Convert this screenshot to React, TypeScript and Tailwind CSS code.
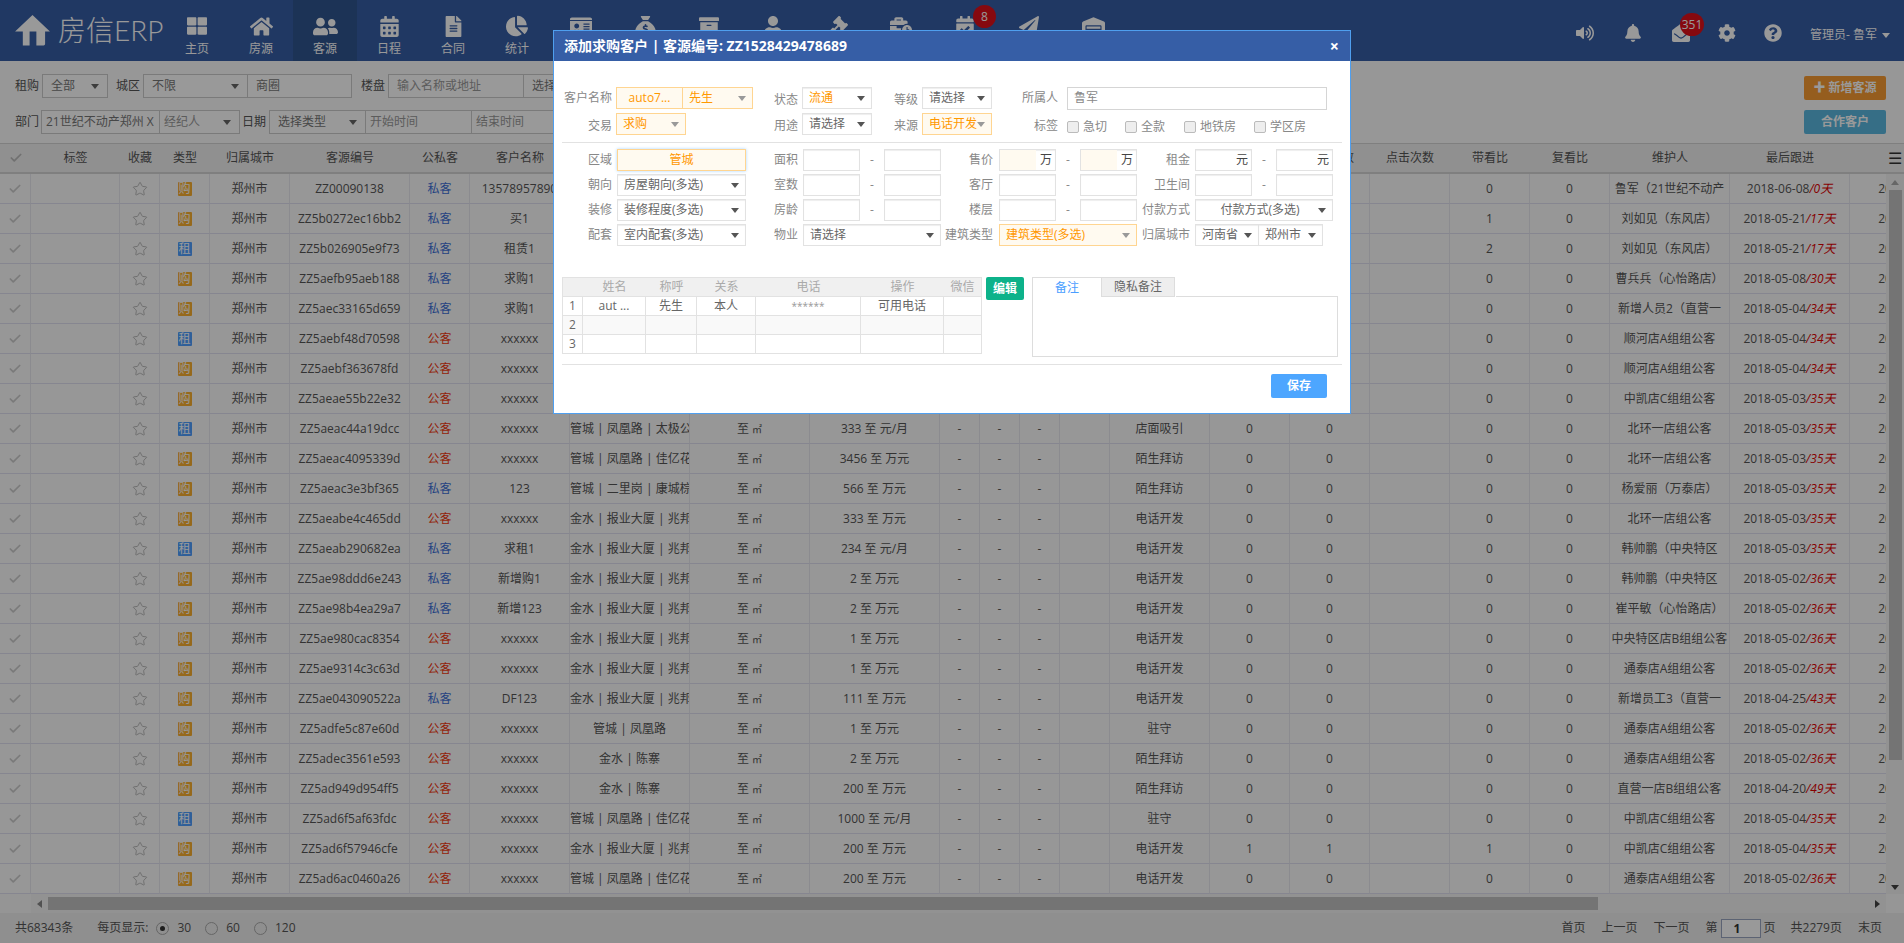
import { Check, Star } from "lucide-react";
import {
  FaArchive,
  FaBell,
  FaBusinessTime,
  FaCalendarAlt,
  FaCalendarCheck,
  FaChartPie,
  FaCog,
  FaEnvelopeOpen,
  FaFileAlt,
  FaGavel,
  FaHome,
  FaIdCard,
  FaPaperPlane,
  FaQuestionCircle,
  FaThLarge,
  FaUser,
  FaUserFriends,
  FaVolumeUp,
  FaWarehouse,
} from "react-icons/fa";
import { FaSackDollar } from "react-icons/fa6";

// 统计之后的菜单文字被弹窗挡住，只留图标
const navItems = [
  { label: "主页", Icon: FaThLarge, size: 20 },
  { label: "房源", Icon: FaHome, size: 23 },
  { label: "客源", Icon: FaUserFriends, size: 25, active: true },
  { label: "日程", Icon: FaCalendarAlt, size: 21 },
  { label: "合同", Icon: FaFileAlt, size: 21 },
  { label: "统计", Icon: FaChartPie, size: 22 },
  { label: "", Icon: FaIdCard, size: 22 },
  { label: "", Icon: FaSackDollar, size: 21 },
  { label: "", Icon: FaArchive, size: 20 },
  { label: "", Icon: FaUser, size: 20 },
  { label: "", Icon: FaGavel, size: 21 },
  { label: "", Icon: FaBusinessTime, size: 22 },
  { label: "", Icon: FaCalendarCheck, size: 20, badge: "8" },
  { label: "", Icon: FaPaperPlane, size: 20 },
  { label: "", Icon: FaWarehouse, size: 23 },
];

const colWidths = [31, 89, 40, 50, 80, 120, 60, 100, 120, 120, 130, 40, 40, 40, 50, 100, 80, 80, 80, 80, 80, 120, 120, 120];
const headers = ["", "标签", "收藏", "类型", "归属城市", "客源编号", "公私客", "客户名称", "", "", "", "", "", "", "", "", "", "带看次数", "点击次数", "带看比", "复看比", "维护人", "最后跟进", ""];

const FX = "管城 | 凤凰路 | 佳亿花";
const JS = "金水 | 报业大厦 | 兆邦";

type Row = [string, string, string, string, string, string, string, string, string, string, string, string, string];

// 编号, 类型, 公私, 名称, 区域, 价格, 来源, 次数1, 次数2, 带看, 维护人, 日期, 天数
const rows: Row[] = [
  ["ZZ00090138", "购", "私客", "13578957890", "", "", "", "", "", "0", "鲁军（21世纪不动产", "2018-06-08", "0天"],
  ["ZZ5b0272ec16bb2", "购", "私客", "买1", "", "", "", "", "", "1", "刘如见（东风店）", "2018-05-21", "17天"],
  ["ZZ5b026905e9f73", "租", "私客", "租赁1", "", "", "", "", "", "2", "刘如见（东风店）", "2018-05-21", "17天"],
  ["ZZ5aefb95aeb188", "购", "私客", "求购1", "", "", "", "", "", "0", "曹兵兵（心怡路店）", "2018-05-08", "30天"],
  ["ZZ5aec33165d659", "购", "私客", "求购1", "", "", "", "", "", "0", "新增人员2（直营一", "2018-05-04", "34天"],
  ["ZZ5aebf48d70598", "租", "公客", "xxxxxx", "", "", "", "", "", "0", "顺河店A组组公客", "2018-05-04", "34天"],
  ["ZZ5aebf363678fd", "购", "公客", "xxxxxx", "", "", "", "", "", "0", "顺河店A组组公客", "2018-05-04", "34天"],
  ["ZZ5aeae55b22e32", "购", "公客", "xxxxxx", "", "", "", "", "", "0", "中凯店C组组公客", "2018-05-03", "35天"],
  ["ZZ5aeac44a19dcc", "租", "公客", "xxxxxx", "管城 | 凤凰路 | 太极公", "333 至 元/月", "店面吸引", "0", "0", "0", "北环一店组公客", "2018-05-03", "35天"],
  ["ZZ5aeac4095339d", "购", "公客", "xxxxxx", FX, "3456 至 万元", "陌生拜访", "0", "0", "0", "北环一店组公客", "2018-05-03", "35天"],
  ["ZZ5aeac3e3bf365", "购", "私客", "123", "管城 | 二里岗 | 康城棕", "566 至 万元", "陌生拜访", "0", "0", "0", "杨爱丽（万泰店）", "2018-05-03", "35天"],
  ["ZZ5aeabe4c465dd", "购", "公客", "xxxxxx", JS, "333 至 万元", "电话开发", "0", "0", "0", "北环一店组公客", "2018-05-03", "35天"],
  ["ZZ5aeab290682ea", "租", "私客", "求租1", JS, "234 至 元/月", "电话开发", "0", "0", "0", "韩帅鹏（中央特区", "2018-05-03", "35天"],
  ["ZZ5ae98ddd6e243", "购", "私客", "新增购1", JS, "2 至 万元", "电话开发", "0", "0", "0", "韩帅鹏（中央特区", "2018-05-02", "36天"],
  ["ZZ5ae98b4ea29a7", "购", "私客", "新增123", JS, "2 至 万元", "电话开发", "0", "0", "0", "崔平敏（心怡路店）", "2018-05-02", "36天"],
  ["ZZ5ae980cac8354", "购", "公客", "xxxxxx", JS, "1 至 万元", "电话开发", "0", "0", "0", "中央特区店B组组公客", "2018-05-02", "36天"],
  ["ZZ5ae9314c3c63d", "购", "公客", "xxxxxx", JS, "1 至 万元", "电话开发", "0", "0", "0", "通泰店A组组公客", "2018-05-02", "36天"],
  ["ZZ5ae043090522a", "购", "私客", "DF123", JS, "111 至 万元", "电话开发", "0", "0", "0", "新增员工3（直营一", "2018-04-25", "43天"],
  ["ZZ5adfe5c87e60d", "购", "公客", "xxxxxx", "管城 | 凤凰路", "1 至 万元", "驻守", "0", "0", "0", "通泰店A组组公客", "2018-05-02", "36天"],
  ["ZZ5adec3561e593", "购", "公客", "xxxxxx", "金水 | 陈寨", "2 至 万元", "陌生拜访", "0", "0", "0", "通泰店A组组公客", "2018-05-02", "36天"],
  ["ZZ5ad949d954ff5", "购", "公客", "xxxxxx", "金水 | 陈寨", "200 至 万元", "陌生拜访", "0", "0", "0", "直营一店B组组公客", "2018-04-20", "49天"],
  ["ZZ5ad6f5af63fdc", "租", "公客", "xxxxxx", FX, "1000 至 元/月", "驻守", "0", "0", "0", "中凯店C组组公客", "2018-05-04", "35天"],
  ["ZZ5ad6f57946cfe", "购", "公客", "xxxxxx", JS, "200 至 万元", "电话开发", "1", "1", "1", "中凯店C组组公客", "2018-05-04", "35天"],
  ["ZZ5ad6ac0460a26", "购", "公客", "xxxxxx", FX, "200 至 万元", "电话开发", "0", "0", "0", "通泰店A组组公客", "2018-05-02", "36天"],
];

const Caret = ({ color = "border-t-[#666]" }: { color?: string }) => (
  <span className={`h-0 w-0 shrink-0 border-x-[4px] border-t-[5px] border-x-transparent ${color}`} />
);

const FilterBox = ({ text, w, caret, left, muted }: { text: string; w: string; caret?: boolean; left?: boolean; muted?: boolean }) => (
  <div className={`flex h-full items-center justify-between border border-[#ccc] bg-white pl-2 pr-2 ${w} ${left ? "" : "border-l-0"} ${muted ? "text-[#999]" : "text-[#777]"}`}>
    <span className="truncate">{text}</span>
    {caret && <Caret />}
  </div>
);

const Sel = ({ text, w, hot, center }: { text: string; w: string; hot?: boolean; center?: boolean }) => (
  <div
    className={`flex h-[22px] shrink-0 items-center justify-between pl-[6px] pr-[6px] ${w} ${
      hot ? "border border-[#ffd591] bg-[#fffaf0] text-[#ff9800]" : "border border-[#e2e2e2] bg-white text-[#666] shadow-[inset_0_1px_1px_#eee]"
    }`}
  >
    <span className={`truncate ${center ? "flex-1 text-center" : ""}`}>{text}</span>
    <Caret color={hot ? "border-t-[#999]" : "border-t-[#555]"} />
  </div>
);

const Lbl = ({ text, w }: { text: string; w: string }) => (
  <span className={`shrink-0 text-right text-[#888] ${w}`}>{text}</span>
);

const Inp = ({ unit, tint }: { unit?: string; tint?: boolean }) => (
  <div className="flex h-[22px] w-[57px] shrink-0 border border-[#e2e2e2] bg-white shadow-[inset_0_1px_1px_#eee]">
    <span className={`flex-1 ${tint ? "bg-[#fffaf0]" : ""}`} />
    {unit && <span className="pl-1 pr-[3px] leading-[20px] text-[#444]">{unit}</span>}
  </div>
);

const Range = ({ unit, tint }: { unit?: string; tint?: boolean }) => (
  <div className="flex shrink-0 items-center">
    <Inp unit={unit} tint={tint} />
    <span className="w-[24px] text-center text-[#888]">-</span>
    <Inp unit={unit} tint={tint} />
  </div>
);

const Tick = ({ text, ml }: { text: string; ml: string }) => (
  <label className={`flex items-center pt-[5px] ${ml}`}>
    <span className="h-[12px] w-[12px] rounded-[2px] border border-[#bbb] bg-[#eee]" />
    <span className="ml-[4px] text-[#888]">{text}</span>
  </label>
);

const Radio = ({ on, ml }: { on?: boolean; ml: string }) => (
  <span className={`flex h-[13px] w-[13px] items-center justify-center rounded-full border border-[#aaa] bg-[#eee] ${ml}`}>
    {on && <span className="h-[5px] w-[5px] rounded-full bg-[#333]" />}
  </span>
);

const contactWidths = [20, 63, 51, 59, 105, 83, 38];

const Modal = () => (
  <div className="absolute left-[553px] top-[30px] flex h-[384px] w-[798px] flex-col border border-[#4f9fef] bg-white text-xs">
    <div className="flex h-[30px] shrink-0 items-center justify-between bg-[#365ea6] pl-[10px] pr-[11px] text-white">
      <span className="text-sm font-bold">添加求购客户 | 客源编号: ZZ1528429478689</span>
      <span className="text-base font-bold leading-none">×</span>
    </div>

    <div className="mt-[26px] flex h-[22px] items-center">
      <Lbl text="客户名称" w="w-[58px]" />
      <div className="ml-1 flex h-[22px] w-[137px] shrink-0 border border-[#ffd591] bg-[#fffaf0] text-[#ff9800]">
        <span className="w-[66px] border-r border-[#ffd591] text-center leading-[20px]">auto7...</span>
        <span className="flex flex-1 items-center justify-between pl-[6px] pr-[6px]">
          先生
          <Caret color="border-t-[#999]" />
        </span>
      </div>
      <Lbl text="状态" w="w-[45px] pt-1" />
      <div className="ml-1"><Sel text="流通" w="w-[70px] text-[#ff9800]!" /></div>
      <Lbl text="等级" w="w-[46px] pt-1" />
      <div className="ml-1"><Sel text="请选择" w="w-[70px]" /></div>
      <Lbl text="所属人" w="w-[66px]" />
      <div className="ml-[9px] flex h-[23px] w-[260px] items-center border border-[#d5d5d5] pl-[6px] text-[#888]">鲁军</div>
    </div>

    <div className="mt-1 flex h-[22px] items-center">
      <Lbl text="交易" w="w-[58px] pt-1" />
      <div className="ml-1"><Sel text="求购" w="w-[70px]" hot /></div>
      <span className="w-[67px] shrink-0" />
      <Lbl text="用途" w="w-[45px] pt-1" />
      <div className="ml-1"><Sel text="请选择" w="w-[70px]" /></div>
      <Lbl text="来源" w="w-[46px] pt-1" />
      <div className="ml-1"><Sel text="电话开发" w="w-[70px]" hot /></div>
      <Lbl text="标签" w="w-[66px] pt-1" />
      <Tick text="急切" ml="ml-[9px]" />
      <Tick text="全款" ml="ml-[18px]" />
      <Tick text="地铁房" ml="ml-[19px]" />
      <Tick text="学区房" ml="ml-[18px]" />
    </div>

    <div className="mx-2 mt-[7px] border-t border-[#e2e2e2]" />

    <div className="mt-[6px] flex flex-col gap-[3px]">
      <div className="flex h-[22px] items-center">
        <Lbl text="区域" w="w-[58px]" />
        <div className="ml-[5px] h-[22px] w-[129px] shrink-0 border border-[#ffd591] bg-[#fffaf0] text-center leading-[20px] text-[#ff9800] shadow-[0_0_3px_#a8d4ff]">管城</div>
        <Lbl text="面积" w="w-[52px]" />
        <div className="ml-[5px]"><Range /></div>
        <Lbl text="售价" w="w-[52px]" />
        <div className="ml-[6px]"><Range unit="万" tint /></div>
        <Lbl text="租金" w="w-[53px]" />
        <div className="ml-[5px]"><Range unit="元" /></div>
      </div>
      <div className="flex h-[22px] items-center">
        <Lbl text="朝向" w="w-[58px]" />
        <div className="ml-[5px]"><Sel text="房屋朝向(多选)" w="w-[129px]" /></div>
        <Lbl text="室数" w="w-[52px]" />
        <div className="ml-[5px]"><Range /></div>
        <Lbl text="客厅" w="w-[52px]" />
        <div className="ml-[6px]"><Range /></div>
        <Lbl text="卫生间" w="w-[53px]" />
        <div className="ml-[5px]"><Range /></div>
      </div>
      <div className="flex h-[22px] items-center">
        <Lbl text="装修" w="w-[58px]" />
        <div className="ml-[5px]"><Sel text="装修程度(多选)" w="w-[129px]" /></div>
        <Lbl text="房龄" w="w-[52px]" />
        <div className="ml-[5px]"><Range /></div>
        <Lbl text="楼层" w="w-[52px]" />
        <div className="ml-[6px]"><Range /></div>
        <Lbl text="付款方式" w="w-[53px]" />
        <div className="ml-[5px]"><Sel text="付款方式(多选)" w="w-[138px]" center /></div>
      </div>
      <div className="flex h-[22px] items-center">
        <Lbl text="配套" w="w-[58px]" />
        <div className="ml-[5px]"><Sel text="室内配套(多选)" w="w-[129px]" /></div>
        <Lbl text="物业" w="w-[52px]" />
        <div className="ml-[5px]"><Sel text="请选择" w="w-[138px]" /></div>
        <Lbl text="建筑类型" w="w-[52px]" />
        <div className="ml-[6px]"><Sel text="建筑类型(多选)" w="w-[138px]" hot /></div>
        <Lbl text="归属城市" w="w-[53px]" />
        <div className="ml-[5px] flex">
          <Sel text="河南省" w="w-[64px]" />
          <Sel text="郑州市" w="w-[64px] border-l-0" />
        </div>
      </div>
    </div>

    <div className="ml-2 mt-[31px] flex h-[80px] items-start">
      <table className="w-[420px] table-fixed border-separate border-spacing-0 border-l border-t border-[#e2e2e2] text-center">
        <colgroup>
          {contactWidths.map((w, i) => (
            <col key={i} style={{ width: w }} />
          ))}
        </colgroup>
        <thead>
          <tr className="bg-[#f0f0f0] text-[#aaa]">
            {["", "姓名", "称呼", "关系", "电话", "操作", "微信"].map((h, i) => (
              <th key={i} className="h-[19px] border-b border-[#e2e2e2] font-normal last:border-r">{h}</th>
            ))}
          </tr>
        </thead>
        <tbody className="text-[#666]">
          {[
            ["1", "aut ...", "先生", "本人", "******", "可用电话", ""],
            ["2", "", "", "", "", "", ""],
            ["3", "", "", "", "", "", ""],
          ].map((r, i) => (
            <tr key={i} className={i === 1 ? "bg-[#f9f9f9]" : ""}>
              {r.map((c, j) => (
                <td key={j} className={`h-[19px] overflow-hidden whitespace-nowrap border-b border-r border-[#e2e2e2] leading-none ${c === "******" ? "text-[10px] text-[#999]" : ""}`}>{c}</td>
              ))}
            </tr>
          ))}
        </tbody>
      </table>
      <button className="ml-1 h-[23px] w-[38px] rounded-[2px] bg-[#0db28a] font-bold text-white">编辑</button>
      <div className="ml-2 w-[306px]">
        <div className="flex h-[20px]">
          <span className="w-[69px] border-l border-t border-[#ddd] text-center leading-[19px] text-[#4a9eff]">备注</span>
          <span className="w-[74px] border-x border-b border-t border-[#ddd] bg-[#eee] text-center leading-[18px] text-[#666]">隐私备注</span>
        </div>
        <div className="-mt-px h-[61px] border border-t-0 border-[#ddd]">
          <div className="ml-[143px] border-t border-[#ddd]" />
        </div>
      </div>
    </div>

    <div className="mx-2 mt-[7px] border-t border-[#e2e2e2]" />

    <div className="mt-[9px] flex justify-end pr-[23px]">
      <button className="h-[24px] w-[56px] rounded-[2px] bg-[#4da6ff] font-bold text-white">保存</button>
    </div>
  </div>
);

export default function App() {
  return (
    <div className="relative flex h-[943px] w-full flex-col overflow-hidden bg-[#fcfcfc] font-['Open_Sans','Noto_Sans_CJK_SC',sans-serif] text-xs text-[#555]">
      <header className="flex h-[61px] shrink-0 bg-[#365ea6] text-white">
        <div className="flex w-[165px] shrink-0 items-center pb-[1px] pl-[15px]">
          <svg viewBox="0 0 36 32" className="h-[31px] w-[35px] fill-white">
            <path d="M18 0 36 17H31V30a1.5 1.5 0 0 1-1.5 1.5H22V17H15V31.5H8V17H0Z" />
          </svg>
          <span className="ml-2 whitespace-nowrap font-['Lato','Noto_Sans_CJK_SC',sans-serif] text-[28px] font-light leading-none">房信ERP</span>
        </div>
        {navItems.map(({ label, Icon, size, active, badge }, i) => (
          <div key={i} className={`relative flex w-[64px] shrink-0 flex-col items-center pt-[15px] ${active ? "bg-[#2f5590]" : ""}`}>
            <span className="flex h-[22px] items-center justify-center">
              <Icon size={size} />
            </span>
            {label && <span className="mt-[4px]">{label}</span>}
            {badge && (
              <span className="absolute left-[40px] top-[5px] flex h-[23px] w-[23px] items-center justify-center rounded-full bg-[#e0101a]">{badge}</span>
            )}
          </div>
        ))}
        <div className="ml-auto flex items-center pr-[14px] pt-[5px]">
          <FaVolumeUp size={18} />
          <FaBell size={18} className="ml-[30px]" />
          <div className="relative ml-[30px]">
            <FaEnvelopeOpen size={18} />
            <span className="absolute -top-[11px] left-[8px] flex h-[23px] w-[24px] items-center justify-center rounded-full bg-[#e0101a]">351</span>
          </div>
          <FaCog size={18} className="ml-[28px]" />
          <FaQuestionCircle size={18} className="ml-[28px]" />
          <span className="ml-[28px] mt-[4px] whitespace-nowrap">管理员- 鲁军</span>
          <span className="ml-[5px] mt-[4px] flex"><Caret color="border-t-white" /></span>
        </div>
      </header>

      <section className="flex h-[82px] shrink-0 justify-between">
        <div className="flex flex-col gap-3 pl-[15px] pt-[13px]">
          <div className="flex h-6 items-center">
            <span className="w-[27px] shrink-0">租购</span>
            <FilterBox text="全部" w="w-[66px]" caret left />
            <span className="ml-2 w-[27px] shrink-0">城区</span>
            <FilterBox text="不限" w="w-[105px]" caret left />
            <FilterBox text="商圈" w="w-[104px]" />
            <span className="ml-[9px] w-[27px] shrink-0">楼盘</span>
            <FilterBox text="输入名称或地址" w="w-[136px]" left muted />
            <FilterBox text="选择" w="w-[100px]" />
          </div>
          <div className="flex h-6 items-center">
            <span className="w-[26px] shrink-0">部门</span>
            <FilterBox text="21世纪不动产郑州 X" w="w-[119px] pl-1! pr-0!" left />
            <FilterBox text="经纪人" w="w-[80px] pl-1!" caret muted />
            <span className="ml-[2px] w-[27px] shrink-0">日期</span>
            <FilterBox text="选择类型" w="w-[97px]" caret left />
            <FilterBox text="开始时间" w="w-[106px] pl-1!" muted />
            <FilterBox text="结束时间" w="w-[106px] pl-1!" muted />
          </div>
        </div>
        <div className="flex w-[100px] flex-col gap-[10px] pr-[18px] pt-[15px] text-white">
          <button className="h-6 w-[82px] rounded-[2px] bg-[#f99b32] font-bold">✚ 新增客源</button>
          <button className="h-6 w-[82px] rounded-[2px] bg-[#5ab8e0] font-bold">合作客户</button>
        </div>
      </section>

      <div className="flex min-h-0 flex-1">
        <div className="min-w-0 flex-1 overflow-hidden">
          <table className="w-[1970px] table-fixed border-separate border-spacing-0 text-center">
            <colgroup>
              {colWidths.map((w, i) => (
                <col key={i} style={{ width: w }} />
              ))}
            </colgroup>
            <thead>
              <tr className="bg-[#f0f0f0]">
                {headers.map((h, i) => (
                  <th key={i} className="h-[31px] overflow-hidden whitespace-nowrap border-b-2 border-t border-[#d4d4d4] font-normal text-[#555]">
                    {i === 0 ? <Check size={14} strokeWidth={3} className="mx-auto text-[#bbb]" /> : h}
                  </th>
                ))}
              </tr>
            </thead>
            <tbody>
              {rows.map((r, i) => {
                const cell = "h-[30px] overflow-hidden whitespace-nowrap border-b border-r border-b-[#dfdff0] border-r-[#e8e8ee]";
                // 前 8 行的中间几列在弹窗下面
                const under = i < 8;
                return (
                  <tr key={i}>
                    <td className={`${cell} border-r-[#dfdff0]`}><Check size={14} strokeWidth={3} className="mx-auto text-[#ccc]" /></td>
                    <td className={cell} />
                    <td className={cell}><Star size={16} strokeWidth={1.5} className="mx-auto text-[#bbb]" /></td>
                    <td className={cell}>
                      <span className={`mx-auto flex h-[14px] w-[14px] items-center justify-center rounded-[1px] leading-none text-white ${r[1] === "租" ? "bg-[#4f9fff]" : "bg-[#fbb02f]"}`}>{r[1]}</span>
                    </td>
                    <td className={cell}>郑州市</td>
                    <td className={cell}>{r[0]}</td>
                    <td className={`${cell} ${r[2] === "公客" ? "text-[#f43a10]" : "text-[#4070d8]"}`}>{r[2]}</td>
                    <td className={cell}>{r[3]}</td>
                    <td className={cell}>{r[4]}</td>
                    <td className={cell}>{under ? "" : <>至 <span className="text-[10px]">㎡</span></>}</td>
                    <td className={cell}>{r[5]}</td>
                    <td className={cell}>{under ? "" : "-"}</td>
                    <td className={cell}>{under ? "" : "-"}</td>
                    <td className={cell}>{under ? "" : "-"}</td>
                    <td className={cell} />
                    <td className={cell}>{r[6]}</td>
                    <td className={cell}>{r[7]}</td>
                    <td className={cell}>{r[8]}</td>
                    <td className={cell} />
                    <td className={cell}>{r[9]}</td>
                    <td className={cell}>0</td>
                    <td className={cell}>{r[10]}</td>
                    <td className={cell}>
                      {r[11]}
                      <i className="text-[#e00000]">/{r[12]}</i>
                    </td>
                    <td className={cell}>{r[11]}</td>
                  </tr>
                );
              })}
            </tbody>
          </table>
        </div>
        <div className="flex w-[18px] shrink-0 flex-col">
          <div className="flex h-[31px] items-center justify-center border-b-2 border-t border-[#d4d4d4] bg-[#f0f0f0] text-base leading-none text-[#333]">☰</div>
          <div className="flex flex-1 flex-col items-center bg-[#f4f4f4]">
            <span className="mt-[6px] h-0 w-0 border-x-[4px] border-b-[5px] border-x-transparent border-b-[#aaa]" />
            <span className="mt-[5px] h-[570px] w-[13px] bg-[#c1c1c1]" />
            <span className="mb-[4px] mt-auto h-0 w-0 border-x-[4px] border-t-[5px] border-x-transparent border-t-[#444]" />
          </div>
        </div>
      </div>

      <div className="flex h-[19px] shrink-0 items-center bg-[#f4f4f4]">
        <span className="h-full w-[31px] shrink-0 bg-[#f8f8f8]" />
        <span className="ml-[6px] h-0 w-0 border-y-[4px] border-r-[5px] border-y-transparent border-r-[#888]" />
        <span className="ml-[6px] h-[13px] w-[1550px] bg-[#c1c1c1]" />
        <span className="ml-auto mr-[6px] h-0 w-0 border-y-[4px] border-l-[5px] border-y-transparent border-l-[#444]" />
        <span className="h-full w-[18px] shrink-0 bg-[#fafafa]" />
      </div>

      <footer className="flex h-[30px] shrink-0 items-center bg-[#eeeeee] pl-[15px] pr-[22px]">
        <span>共68343条</span>
        <span className="ml-[24px]">每页显示:</span>
        <Radio on ml="ml-[8px]" />
        <span className="ml-[8px]">30</span>
        <Radio ml="ml-[14px]" />
        <span className="ml-[8px]">60</span>
        <Radio ml="ml-[14px]" />
        <span className="ml-[8px]">120</span>
        <span className="ml-auto">首页</span>
        <span className="ml-4">上一页</span>
        <span className="ml-4">下一页</span>
        <span className="ml-4">第</span>
        <span className="ml-[3px] h-[19px] w-[40px] border border-[#9aa6c0] bg-white pl-3 font-bold leading-[17px] text-[#333]">1</span>
        <span className="ml-[3px]">页</span>
        <span className="ml-[15px]">共2279页</span>
        <span className="ml-4">末页</span>
      </footer>

      <div className="absolute inset-0 bg-black/40" />
      <Modal />
    </div>
  );
}
